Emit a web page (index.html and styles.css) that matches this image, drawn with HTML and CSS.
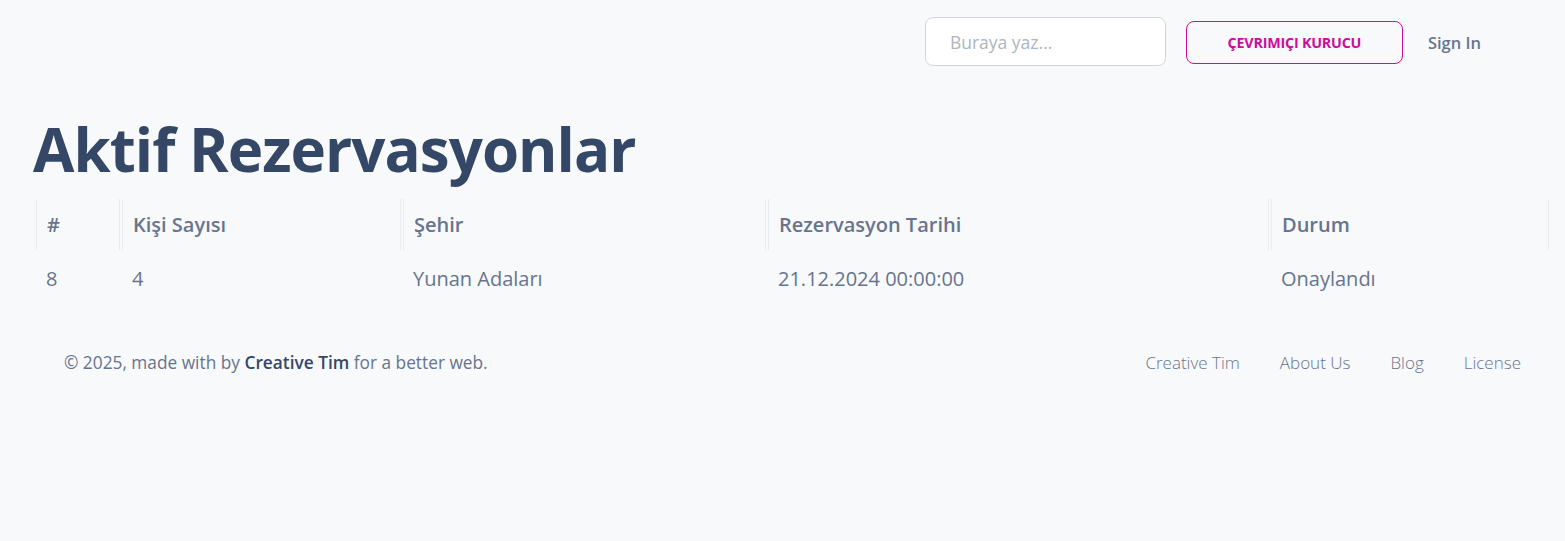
FILE: index.html
```html
<!DOCTYPE html>
<html lang="tr">
<head>
<meta charset="utf-8">
<title>Aktif Rezervasyonlar</title>
<link rel="stylesheet" href="styles.css">
</head>
<body>
<div class="page">
  <nav class="topbar">
    <input class="search" type="text" placeholder="Buraya yaz...">
    <a class="btn-outline" href="#">ÇEVRIMIÇI KURUCU</a>
    <a class="signin" href="#">Sign In</a>
  </nav>
  <main class="content">
    <h1 class="title">Aktif Rezervasyonlar</h1>
    <table class="res-table">
      <colgroup>
        <col class="c1"><col class="c2"><col class="c3"><col class="c4"><col class="c5">
      </colgroup>
      <thead>
        <tr><th>#</th><th>Kişi Sayısı</th><th>Şehir</th><th>Rezervasyon Tarihi</th><th>Durum</th></tr>
      </thead>
      <tbody>
        <tr><td>8</td><td>4</td><td>Yunan Adaları</td><td>21.12.2024 00:00:00</td><td>Onaylandı</td></tr>
      </tbody>
    </table>
  </main>
  <footer class="footer">
    <div class="copy">© 2025, made with by <a href="#" class="brand">Creative Tim</a> for a better web.</div>
    <ul class="links">
      <li><a href="#">Creative Tim</a></li>
      <li><a href="#">About Us</a></li>
      <li><a href="#">Blog</a></li>
      <li><a href="#">License</a></li>
    </ul>
  </footer>
</div>
</body>
</html>
```

FILE: styles.css
```css
html, body {
  margin: 0;
  padding: 0;
  background: #f8f9fa;
}
body {
  font-family: "Open Sans", "Liberation Sans", sans-serif;
  color: #67748e;
}
a { text-decoration: none; }

.topbar {
  display: flex;
  justify-content: flex-end;
  align-items: center;
  padding: 17px 84px 0 0;
  height: 49px;
}
.search {
  box-sizing: border-box;
  width: 241px;
  height: 49px;
  border: 1px solid #d2d6da;
  border-radius: 8px;
  background: #fff;
  padding: 0 24px;
  font-family: "Open Sans", sans-serif;
  font-size: 17.5px;
  color: #495057;
  outline: none;
}
.search::placeholder { color: #adb5bd; }
.btn-outline {
  box-sizing: border-box;
  margin-left: 20px;
  width: 217px;
  height: 43px;
  display: flex;
  align-items: center;
  justify-content: center;
  border: 1px solid #cb0c9f;
  border-radius: 8px;
  color: #cb0c9f;
  font-size: 14.3px;
  font-weight: 700;
  letter-spacing: -0.2px;
  margin-top: 2px;
}
.signin {
  margin-left: 25px;
  font-size: 16.5px;
  font-weight: 600;
  color: #67748e;
  margin-top: 2px;
}

.content {
  padding: 0 15px 0 34px;
}
.title {
  margin: 47px 0 12px -1px;
  font-size: 60px;
  line-height: 1.2;
  font-weight: 700;
  letter-spacing: -0.95px;
  color: #344767;
}
.res-table {
  width: 100%;
  table-layout: fixed;
  border-collapse: separate;
  border-spacing: 2px;
}
.c1 { width: 84px; }
.c2 { width: 279px; }
.c3 { width: 363px; }
.c4 { width: 501px; }
.c5 { width: 278px; }
.res-table th,
.res-table td {
  box-sizing: border-box;
  padding: 12px 10px;
  font-size: 20px;
  line-height: 27px;
  text-align: left;
  color: #67748e;
}
.res-table th {
  font-weight: 600;
  border-left: 1px solid #e9ecef;
  border-right: 1px solid #e9ecef;
}
.res-table td {
  font-weight: 400;
  padding-top: 13px;
}

.footer {
  display: flex;
  justify-content: space-between;
  align-items: flex-start;
  margin-top: 43px;
  padding: 0 24px 0 64px;
  font-size: 17px;
  line-height: 24px;
}
.copy { color: #67748e; padding-top: 2px; font-size: 17.3px; }
.brand { color: #344767; font-weight: 600; }
.links {
  display: flex;
  list-style: none;
  margin: 0;
  padding: 2px 0 0;
}
.links a {
  display: block;
  padding: 0 20px;
  font-weight: 300;
  color: #67748e;
}
```
